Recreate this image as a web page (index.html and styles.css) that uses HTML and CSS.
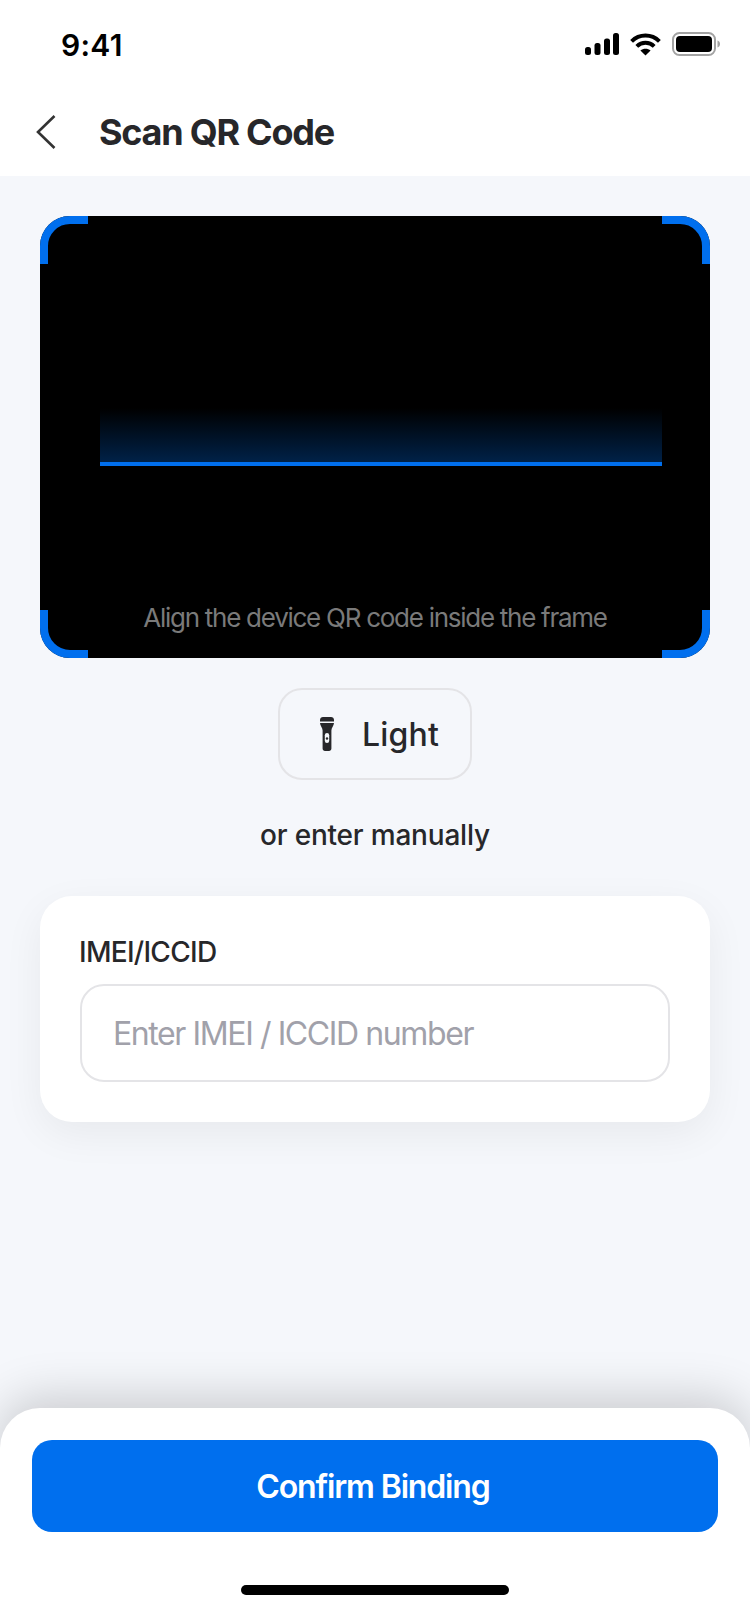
FILE: index.html
```html
<!DOCTYPE html>
<html lang="en">
<head>
  <meta charset="utf-8">
  <title>Scan QR Code</title>
  <link rel="stylesheet" href="styles.css">
</head>
<body>
  <div class="app">
    <div class="status-bar">
      <span class="time">9:41</span>
      <div class="status-icons">
        <svg width="34" height="22" viewBox="0 0 34 22" fill="#000">
          <rect x="0" y="14" width="6" height="8" rx="2.5"/>
          <rect x="9.5" y="10" width="6" height="12" rx="2.5"/>
          <rect x="19" y="5.5" width="6" height="16.5" rx="2.5"/>
          <rect x="28" y="0" width="6" height="22" rx="2.5"/>
        </svg>
        <svg width="31" height="23" viewBox="0 0 31 23" fill="none" stroke="#000" stroke-width="4">
          <path d="M1.6 8.3C9.4 0.6 21.6 0.6 29.4 8.3"/>
          <path d="M6.8 13.4C11.8 8.6 19.2 8.6 24.2 13.4"/>
          <path d="M15.5 22.6L10.4 17.6C13.4 15 17.6 15 20.6 17.6Z" fill="#000" stroke="none"/>
        </svg>
        <svg width="48" height="24" viewBox="0 0 48 24">
          <rect x="1" y="1" width="42" height="22" rx="6.5" fill="none" stroke="#a3a3a3" stroke-width="2"/>
          <rect x="4" y="4" width="36" height="16" rx="4" fill="#000"/>
          <path d="M45.5 8.5C47 9 48 10.4 48 12C48 13.6 47 15 45.5 15.5Z" fill="#a3a3a3"/>
        </svg>
      </div>
    </div>

    <header class="nav-bar">
      <svg class="back" width="20" height="34" viewBox="0 0 20 34" fill="none" stroke="#333" stroke-width="2.6">
        <path d="M18.5 1L2 17L18.5 33"/>
      </svg>
      <h1 class="title">Scan QR Code</h1>
    </header>

    <main class="content">
      <section class="viewer">
        <svg class="corner corner-tl" viewBox="0 0 48 48"><path d="M4 48V30A26 26 0 0 1 30 4H48"/></svg>
        <svg class="corner corner-tr" viewBox="0 0 48 48"><path d="M4 48V30A26 26 0 0 1 30 4H48"/></svg>
        <svg class="corner corner-bl" viewBox="0 0 48 48"><path d="M4 48V30A26 26 0 0 1 30 4H48"/></svg>
        <svg class="corner corner-br" viewBox="0 0 48 48"><path d="M4 48V30A26 26 0 0 1 30 4H48"/></svg>
        <div class="scan-line"></div>
        <p class="hint">Align the device QR code inside the frame</p>
      </section>

      <button class="light-btn" type="button">
        <svg width="14" height="34" viewBox="0 0 14 34">
          <path d="M3 0H11C12.7 0 14 1.3 14 3V4.6H0V3C0 1.3 1.3 0 3 0Z" fill="#27272a"/>
          <path d="M0 6H14C14 8.6 11.4 10.6 11.4 13.5V31.5C11.4 33 10.4 34 9 34H5C3.6 34 2.6 33 2.6 31.5V13.5C2.6 10.6 0 8.6 0 6Z" fill="#27272a"/>
          <rect x="4.8" y="16" width="4.4" height="10" rx="2.2" fill="#f5f7fb"/>
          <circle cx="7" cy="21.5" r="1.2" fill="#27272a"/>
        </svg>
        <span>Light</span>
      </button>

      <p class="or-text">or enter manually</p>

      <section class="card">
        <label class="field-label" for="imei">IMEI/ICCID</label>
        <input class="field-input" id="imei" type="text" placeholder="Enter IMEI / ICCID number">
      </section>
    </main>

    <footer class="sheet">
      <button class="confirm-btn" type="button">Confirm Binding</button>
      <div class="home-indicator"></div>
    </footer>
  </div>
</body>
</html>
```

FILE: styles.css
```css
* { box-sizing: border-box; }

html, body { margin: 0; padding: 0; }

body {
  font-family: Inter, "Liberation Sans", sans-serif;
  color: #27272a;
  background: #f5f7fb;
}

button, input { font-family: inherit; }

.app {
  width: 750px;
  height: 1624px;
  display: flex;
  flex-direction: column;
  overflow: hidden;
}

/* status bar */
.status-bar {
  height: 88px;
  background: #fff;
  display: flex;
  justify-content: space-between;
  align-items: center;
  padding: 2px 30px 0 61px;
}
.time { font-size: 30px; font-weight: 600; color: #000; letter-spacing: 0.3px; }
.status-icons { display: flex; align-items: center; gap: 11px; margin-top: -2px; }

/* nav */
.nav-bar {
  height: 88px;
  background: #fff;
  display: flex;
  align-items: center;
  padding: 0 0 0 36px;
}
.back { margin-right: 43px; }
.title { margin: 0; font-size: 36px; font-weight: 700; color: #27272a; letter-spacing: -1.25px; }

/* main area */
.content {
  flex: 1;
  padding: 40px 40px 0;
  display: flex;
  flex-direction: column;
  align-items: center;
}

.viewer {
  position: relative;
  width: 670px;
  height: 442px;
  flex: none;
  background: #000;
  border-radius: 30px;
  display: flex;
  align-items: flex-end;
  justify-content: center;
  padding-bottom: 23px;
}
.hint { margin: 0; font-size: 26px; line-height: 34px; color: #7a7a7a; letter-spacing: -1.27px; }

.corner {
  position: absolute;
  width: 48px;
  height: 48px;
  fill: none;
  stroke: #006fee;
  stroke-width: 8;
}
.corner-tl { top: 0; left: 0; }
.corner-tr { top: 0; right: 0; transform: scaleX(-1); }
.corner-bl { bottom: 0; left: 0; transform: scaleY(-1); }
.corner-br { bottom: 0; right: 0; transform: scale(-1, -1); }

.scan-line {
  position: absolute;
  left: 60px;
  right: 48px;
  top: 192px;
  height: 58px;
  border-bottom: 4px solid #006fee;
  background: linear-gradient(to bottom, rgba(0, 111, 238, 0), rgba(0, 111, 238, 0.3));
}

.light-btn {
  margin-top: 30px;
  width: 194px;
  height: 92px;
  flex: none;
  background: transparent;
  border: 2px solid #e4e4e7;
  border-radius: 24px;
  display: flex;
  align-items: center;
  gap: 28px;
  font-size: 32px;
  font-weight: 500;
  color: #27272a;
  letter-spacing: 0.2px;
  padding: 0 0 0 40px;
}

.or-text { margin: 38px 0 0; font-size: 28px; line-height: 34px; font-weight: 500; color: #27272a; letter-spacing: -0.2px; }

.card {
  margin-top: 44px;
  width: 670px;
  height: 226px;
  flex: none;
  background: #fff;
  border-radius: 32px;
  padding: 40px 40px 0;
  box-shadow: 0 12px 40px rgba(0, 0, 0, 0.06);
}
.field-label {
  display: block;
  font-size: 28px;
  line-height: 32px;
  font-weight: 450;
  color: #27272a;
  letter-spacing: -0.72px;
  margin-left: -1px;
}
.field-input {
  display: block;
  margin-top: 16px;
  width: 590px;
  height: 98px;
  border: 2px solid #e4e4e7;
  border-radius: 24px;
  padding: 0 31px;
  font-size: 32px;
  letter-spacing: -1.4px;
  color: #27272a;
  background: #fff;
  outline: none;
}
.field-input::placeholder { color: #a1a1aa; opacity: 1; }

/* bottom sheet */
.sheet {
  height: 216px;
  flex: none;
  background: #fff;
  border-radius: 40px 40px 0 0;
  padding: 32px 32px 0;
  box-shadow: 0 -10px 48px rgba(0, 0, 0, 0.18);
  display: flex;
  flex-direction: column;
  align-items: center;
}
.confirm-btn {
  width: 686px;
  height: 92px;
  flex: none;
  border: 0;
  border-radius: 20px;
  background: #006fee;
  color: #fff;
  font-size: 32px;
  font-weight: 600;
  letter-spacing: -1.15px;
  padding: 0 4px 0 0;
}
.home-indicator {
  margin-top: 53px;
  width: 268px;
  height: 10px;
  border-radius: 5px;
  background: #000;
}
```
